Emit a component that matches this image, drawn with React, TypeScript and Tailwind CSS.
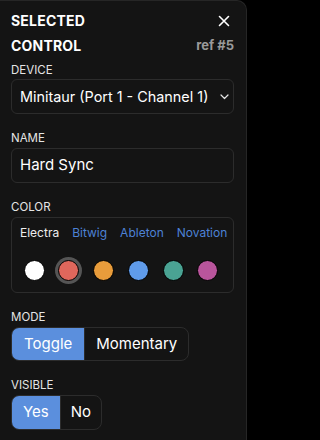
import React from "react";

const colors = [
  { c: "#ffffff", sel: false },
  { c: "#e0675c", sel: true },
  { c: "#e89c3b", sel: false },
  { c: "#5f9bea", sel: false },
  { c: "#4aa393", sel: false },
  { c: "#b9559c", sel: false },
];

export default function App() {
  return (
    <div
      className="w-full min-h-screen bg-black overflow-hidden"
      style={{ fontFamily: "Inter, 'Liberation Sans', sans-serif" }}
    >
      <div className="w-[247px] h-[440px] bg-[#141414] rounded-tr-[10px] border-t border-r border-[#262626] pl-[11px] pr-[12px] pt-[7px] text-white">
        <div className="flex justify-between items-center h-[25px]">
          <span className="font-bold text-[14px] tracking-[0.2px]">SELECTED</span>
          <svg width="12" height="12" viewBox="0 0 12 12" className="mr-[4px]">
            <path d="M1.5 1.5L10.5 10.5M10.5 1.5L1.5 10.5" stroke="white" strokeWidth="1.6" strokeLinecap="round" />
          </svg>
        </div>
        <div className="flex justify-between items-center h-[25px]">
          <span className="font-bold text-[14px] tracking-[0.2px]">CONTROL</span>
          <span className="font-bold text-[13px] text-[#9a9a9a]">ref #5</span>
        </div>

        <div className="mt-[5px] text-[11.5px] text-[#e5e5e5] leading-[14px]">DEVICE</div>
        <div className="mt-[2px] h-[35px] rounded-[6px] border border-[#2c2c2c] bg-[#141414] flex items-center justify-between pl-[8px] pr-[4px]">
          <span className="text-[14.4px] text-white whitespace-nowrap">Minitaur (Port 1 - Channel 1)</span>
          <svg width="9" height="6" viewBox="0 0 9 6" className="shrink-0">
            <path d="M1 1L4.5 4.5L8 1" stroke="#e5e5e5" strokeWidth="1.2" fill="none" strokeLinecap="round" strokeLinejoin="round" />
          </svg>
        </div>

        <div className="mt-[17px] text-[11.5px] text-[#e5e5e5] leading-[14px]">NAME</div>
        <div className="mt-[3px] h-[35px] rounded-[6px] border border-[#2c2c2c] flex items-center pl-[8px]">
          <span className="text-[15px] text-white">Hard Sync</span>
        </div>

        <div className="mt-[17px] text-[11.5px] text-[#e5e5e5] leading-[14px]">COLOR</div>
        <div className="mt-[3px] h-[76px] rounded-[6px] border border-[#2c2c2c] pt-[7px]">
          <div className="flex items-center text-[12px] leading-[16px] pl-[8px] whitespace-nowrap">
            <span className="text-[#eeeeee]">Electra</span>
            <span className="text-[#4d82d6] ml-[13px]">Bitwig</span>
            <span className="text-[#4d82d6] ml-[13px]">Ableton</span>
            <span className="text-[#4d82d6] ml-[13px]">Novation</span>
          </div>
          <div className="flex items-center pl-[11.5px] mt-[19px] gap-[13.8px]">
            {colors.map((x, i) => (
              <div
                key={i}
                className={
                  x.sel
                    ? "w-[21px] h-[21px] shrink-0 rounded-full ring-[3px] ring-[#555555] border border-black"
                    : "w-[21px] h-[21px] shrink-0 rounded-full border border-black"
                }
                style={{ backgroundColor: x.c }}
              />
            ))}
          </div>
        </div>

        <div className="mt-[17px] text-[11.5px] text-[#e5e5e5] leading-[14px]">MODE</div>
        <div className="mt-[3px] inline-flex h-[34px] rounded-[8px] border border-[#2c2c2c] overflow-hidden">
          <div className="bg-[#5b8fdd] text-white text-[15px] flex items-center px-[12px]">Toggle</div>
          <div className="text-white text-[15px] flex items-center px-[11px] border-l border-[#2c2c2c]">Momentary</div>
        </div>

        <div className="mt-[17px] text-[11.5px] text-[#e5e5e5] leading-[14px]">VISIBLE</div>
        <div className="mt-[3px] inline-flex h-[35px] rounded-[8px] border border-[#2c2c2c] overflow-hidden">
          <div className="bg-[#5b8fdd] text-white text-[15px] flex items-center px-[11px]">Yes</div>
          <div className="text-white text-[15px] flex items-center px-[10px] border-l border-[#2c2c2c]">No</div>
        </div>
      </div>
    </div>
  );
}
